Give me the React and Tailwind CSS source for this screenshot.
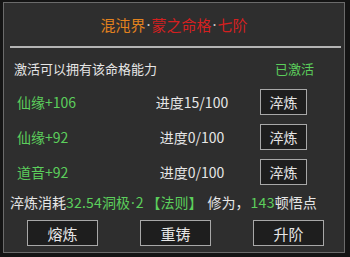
import React from 'react';

const font = { fontFamily: '"Noto Sans CJK SC", "Noto Sans", sans-serif' };
const dot = { fontFamily: '"Noto Sans", sans-serif' };

const rows = [
  { name: '仙缘+106', progress: '进度15/100' },
  { name: '仙缘+92', progress: '进度0/100' },
  { name: '道音+92', progress: '进度0/100' },
];

const App = () => {
  return (
    <div className="w-[350px] h-[257px] bg-[#141414] pl-[3px] pt-[2px] pr-[5px] pb-[4px]" style={font}>
      <div className="h-full border border-[#6b6b6b] bg-[#2e2e2e] text-[#e6e6e6]">
        <div className="h-[43px] flex items-center justify-center text-[15px] leading-none">
          <span className="text-[#e2821e]">混沌界</span>
          <span className="text-[#cfcfcf] px-[1px]" style={dot}>·</span>
          <span className="text-[#d42020]">蒙之命格</span>
          <span className="text-[#cfcfcf] px-[1px]" style={dot}>·</span>
          <span className="text-[#d42020]">七阶</span>
        </div>
        <div className="h-[2px] bg-[#b4b4b4] ml-[6px] mr-[3px]"></div>

        <div className="mt-[10px] h-[22px] flex items-center justify-between pl-[10px] pr-[30px] text-[13px]">
          <span>激活可以拥有该命格能力</span>
          <span className="text-[#5ccf5c]">已激活</span>
        </div>

        <div className="mt-[9px] flex flex-col gap-[9px]">
          {rows.map((r, i) => (
            <div key={i} className="h-[26px] flex items-center text-[14px]">
              <span className="w-[120px] pl-[13px] text-[#5ccf5c]">{r.name}</span>
              <span className="w-[136px] text-center">{r.progress}</span>
              <button className="w-[47px] h-[26px] bg-[#1e1e1e] border border-[#a8a8a8] text-[14px] leading-none">淬炼</button>
            </div>
          ))}
        </div>

        <div className="mt-[7px] h-[20px] flex items-center pl-[6px] text-[14px] whitespace-nowrap">
          <span>淬炼消耗</span>
          <span className="text-[#5ccf5c] tracking-[0.2px]">32.54</span>
          <span className="text-[#5ccf5c]">洞极<span className="px-[1px]" style={dot}>·</span>2</span>
          <span className="text-[#5ccf5c] ml-[3px]">【法则】</span>
          <span className="ml-[5px]">修为，</span>
          <span className="text-[#5ccf5c] ml-[1px] tracking-[0.3px]">143</span>
          <span>顿悟点</span>
        </div>

        <div className="mt-[8px] flex items-center pl-[23px] gap-[42px]">
          {['熔炼', '重铸', '升阶'].map((t) => (
            <button key={t} className="w-[71px] h-[26px] bg-[#1e1e1e] border border-[#a8a8a8] text-[15px] leading-none">{t}</button>
          ))}
        </div>
      </div>
    </div>
  );
};

export default App;
